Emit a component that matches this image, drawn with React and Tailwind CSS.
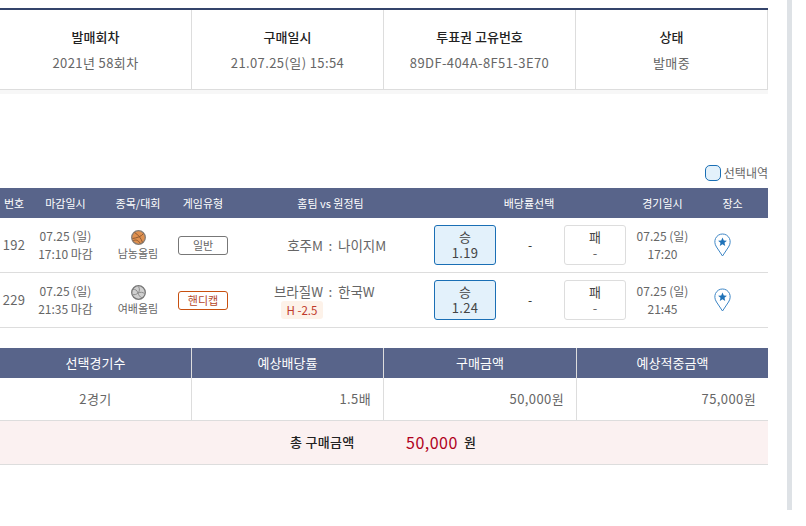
import React from 'react';

const infoCols = [
  { title: '발매회차', value: '2021년 58회차' },
  { title: '구매일시', value: '21.07.25(일) 15:54' },
  { title: '투표권 고유번호', value: '89DF-404A-8F51-3E70' },
  { title: '상태', value: '발매중' },
];

const games = [
  { no: '192', close: '17:10 마감', sport: '남농올림', ball: 'basket', type: '일반', home: '호주M', away: '나이지M', odds: '1.19', time: '17:20' },
  { no: '229', close: '21:35 마감', sport: '여배올림', ball: 'volley', type: '핸디캡', home: '브라질W', away: '한국W', handi: 'H -2.5', odds: '1.24', time: '21:45' },
];

const summaryCols = ['선택경기수', '예상배당률', '구매금액', '예상적중금액'];

const Ball = ({ kind }) =>
  kind === 'basket' ? (
    <svg width="15" height="15" viewBox="0 0 15 15">
      <circle cx="7.5" cy="7.5" r="6.8" fill="#e0914f" stroke="#857d76" strokeWidth="1.3" />
      <path d="M1.500 8.500c4-.5 9-2 11-5M3.500 2.500c3 1.500 7 6 8 10M1.800 11c2.500-1.500 5-1.500 7.500 2.500" fill="none" stroke="#8f5a33" strokeWidth="1" />
    </svg>
  ) : (
    <svg width="15" height="15" viewBox="0 0 15 15">
      <circle cx="7.5" cy="7.5" r="6.8" fill="#cfcfcf" stroke="#767676" strokeWidth="1.3" />
      <path d="M7.500 1.500c1.500 2.500 1 5-.5 6.500M7 8c2.500-1 4.500-1 6.500 .5M7 8c.5 2 2 4 4 5M2 4.500c2-.5 4 .5 5 3.500M1.500 9.500c2 .5 4 0 5.500-1.500" fill="none" stroke="#8d8d8d" strokeWidth="1" />
    </svg>
  );

const Pin = () => (
  <svg width="17" height="24" viewBox="0 0 17 24">
    <path d="M8.500 23 L2.500 14 C0.500 11 0.500 8 1.500 5.500 C3 2.500 5.500 1 8.500 1 C11.500 1 14 2.500 15.500 5.500 C16.500 8 16.500 11 14.500 14 Z" fill="#fff" stroke="#3d86c6" strokeWidth="1" />
    <path d="M8.500 4.500l1.300 2.900 3.100.3-2.400 2.100.7 3.100-2.700-1.600-2.700 1.600.7-3.100-2.400-2.100 3.100-.3z" fill="#1f72b8" />
  </svg>
);

const App = () => {
  return (
    <div className="relative w-[806px] h-[526px] overflow-hidden bg-white font-['Noto_Sans_CJK_KR','Noto_Sans',sans-serif] text-[13px] text-[#666]">
      {/* 스크롤바 */}
      <div className="absolute left-[787px] top-0 w-[5px] h-[510px] bg-[#dee2e6]" />

      <div className="w-[768px] pt-2">
        {/* 투표권 정보 */}
        <div className="grid grid-cols-[192px_192px_192px_192px] h-[82px] border-t-2 border-b border-[#34446b] border-b-[#ddd]">
          {infoCols.map((col) => (
            <div key={col.title} className="flex flex-col items-center pt-[15px] border-r border-[#ddd]">
              <span className="leading-[24px] text-[#222] font-medium">{col.title}</span>
              <span className="leading-[28px] tracking-[0.4px]">{col.value}</span>
            </div>
          ))}
        </div>
        <div className="h-1 bg-[#f7f7f7]" />

        {/* 선택내역 */}
        <div className="flex justify-end items-center gap-[3px] mt-[70px] h-[18px] text-[12px]">
          <span className="w-[16px] h-[16px] rounded-[5px] border border-[#1a6fb5] bg-[#e3f1fb]" />
          <span>선택내역</span>
        </div>

        {/* 경기 목록 */}
        <div className="mt-[6px] grid grid-cols-[28px_75px_70px_60px_195px_200px_69px_71px] h-[30px] items-center bg-[#58648a] text-[11px] text-white text-center">
          <span>번호</span>
          <span>마감일시</span>
          <span>종목/대회</span>
          <span>게임유형</span>
          <span>홈팀 vs 원정팀</span>
          <span className="pl-[2px]">배당률선택</span>
          <span>경기일시</span>
          <span>장소</span>
        </div>
        {games.map((game) => (
          <div key={game.no} className="grid grid-cols-[28px_75px_70px_60px_195px_200px_69px_71px] h-[55px] items-center border-b border-[#ddd] text-center text-[12px]">
            <span className="text-[13px] tracking-[0.3px]">{game.no}</span>
            <div className="flex flex-col text-[12px] leading-[18px]">
              <span>07.25 (일)</span>
              <span>{game.close}</span>
            </div>
            <div className="flex flex-col items-center text-[11px] leading-[16px]">
              <Ball kind={game.ball} />
              <span>{game.sport}</span>
            </div>
            <div className="flex justify-center">
              <span className={`w-[50px] h-[19px] rounded-[3px] border text-[11px] leading-[17px] ${game.type === '일반' ? 'border-[#777] text-[#666]' : 'border-[#c8500f] text-[#b5482a]'}`}>
                {game.type}
              </span>
            </div>
            <div className="grid grid-cols-[90px_15px_90px] text-[13.5px] leading-[18px]">
              <div className="flex flex-col items-end">
                <span>{game.home}</span>
                {game.handi && (
                  <span className="mt-[1px] w-[42px] h-[18px] rounded-[3px] bg-[#fdf2e9] text-[11.5px] text-[#c0392b] text-center">{game.handi}</span>
                )}
              </div>
              <span className="text-center">:</span>
              <span className="text-left">{game.away}</span>
            </div>
            <div className="grid grid-cols-[62px_68px_62px] pl-[6px] items-center">
              <div className="flex flex-col justify-center h-[40px] rounded-[3px] border border-[#1a6fb5] bg-[#e3f1fb] text-[13px] leading-[16px]">
                <span className="text-[#444]">승</span>
                <span className="text-[#444] tracking-[0.3px]">{game.odds}</span>
              </div>
              <span className="text-[#222]">-</span>
              <div className="flex flex-col justify-center h-[40px] rounded-[3px] border border-[#ddd] text-[13px] leading-[16px]">
                <span className="text-[#444]">패</span>
                <span>-</span>
              </div>
            </div>
            <div className="flex flex-col text-[12px] leading-[18px]">
              <span>07.25 (일)</span>
              <span>{game.time}</span>
            </div>
            <div className="flex justify-center pr-[20px]">
              <Pin />
            </div>
          </div>
        ))}

        {/* 합계 */}
        <div className="mt-5 grid grid-cols-[192px_192px_193px_191px] h-[30px] items-stretch bg-[#58648a] text-[13px] text-white text-center">
          {summaryCols.map((title, i) => (
            <span key={title} className={`leading-[30px] ${i < 3 ? 'border-r border-[#ddd]' : ''}`}>{title}</span>
          ))}
        </div>
        <div className="grid grid-cols-[192px_192px_193px_191px] h-[43px] border-b border-[#ddd] text-[13px] leading-[41px] tracking-[0.4px]">
          <span className="text-center border-r border-[#ddd]">2경기</span>
          <span className="text-right pr-3 border-r border-[#ddd]">1.5배</span>
          <span className="text-right pr-3 border-r border-[#ddd]">50,000원</span>
          <span className="text-right pr-3">75,000원</span>
        </div>
        <div className="flex items-center h-[44px] pb-[2px] border-b border-[#ddd] bg-[#fbf1f1] pl-[290px] text-[13px] text-[#222]">
          <span className="w-[116px] font-medium tracking-[0.3px]">총 구매금액</span>
          <span className="w-[58px] text-[16px] text-[#b00020] tracking-[0.5px]">50,000</span>
          <span className="font-medium">원</span>
        </div>
      </div>
    </div>
  );
};

export default App;
